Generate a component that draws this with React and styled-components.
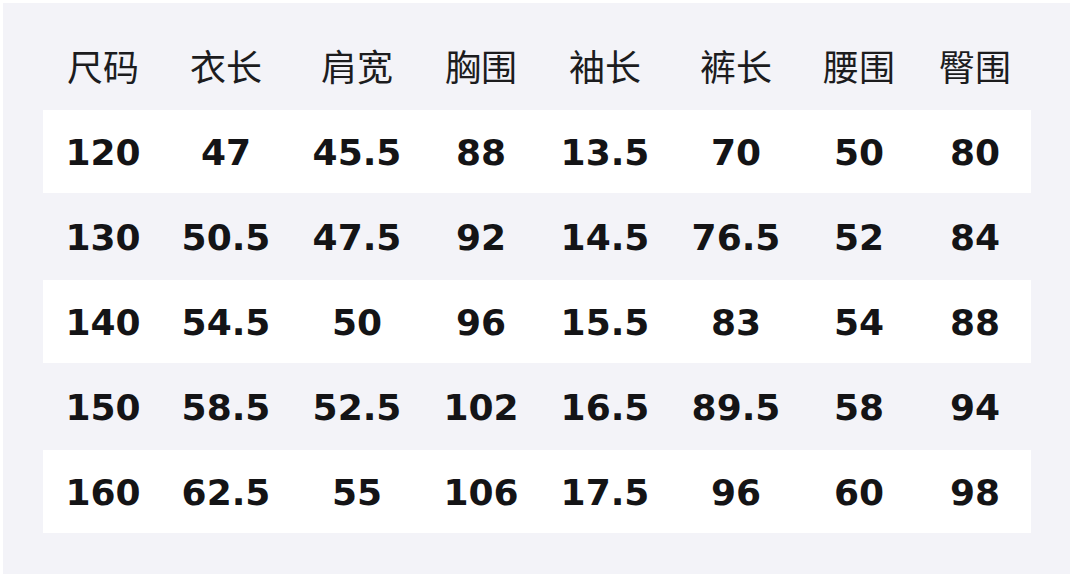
import React from 'react';
import styled, { createGlobalStyle } from 'styled-components';

const GlobalStyle = createGlobalStyle`
    html, body {
        margin: 0;
        padding: 0;
        background: #ffffff;
    }
`;

const headers = ['尺码', '衣长', '肩宽', '胸围', '袖长', '裤长', '腰围', '臀围'];

const rows = [
    ['120', '47', '45.5', '88', '13.5', '70', '50', '80'],
    ['130', '50.5', '47.5', '92', '14.5', '76.5', '52', '84'],
    ['140', '54.5', '50', '96', '15.5', '83', '54', '88'],
    ['150', '58.5', '52.5', '102', '16.5', '89.5', '58', '94'],
    ['160', '62.5', '55', '106', '17.5', '96', '60', '98'],
];

const SizeChart = () => {
    return (
        <Page>
            <Panel>
                <HeaderRow>
                    {headers.map((h) => (
                        <HeadCell key={h}>{h}</HeadCell>
                    ))}
                </HeaderRow>
                {rows.map((row, rowIndex) => (
                    <Row key={row[0]} $striped={rowIndex % 2 === 0}>
                        {row.map((value, i) => (
                            <Cell key={i}>{value}</Cell>
                        ))}
                    </Row>
                ))}
            </Panel>
        </Page>
    );
};

const columns = '120px 126px 136px 112px 136px 126px 120px 112px';

const Page = styled.div`
    width: 1074px;
    height: 578px;
    padding: 3px 4px 4px 3px;
    box-sizing: border-box;
    background: #ffffff;
`;

const Panel = styled.div`
    height: 100%;
    box-sizing: border-box;
    background: #f3f3f8;
    padding: 30px 39px 0 40px;
`;

const HeaderRow = styled.div`
    display: grid;
    grid-template-columns: ${columns};
    height: 77px;
    align-items: center;
`;

const HeadCell = styled.div`
    text-align: center;
    font-family: "Noto Sans CJK SC", "Noto Sans", sans-serif;
    font-size: 36px;
    font-weight: 400;
    color: #1c1c1e;
    line-height: 1;
    padding-bottom: 14px;
`;

const Row = styled.div`
    display: grid;
    grid-template-columns: ${columns};
    align-items: center;
    height: 85px;
    box-sizing: border-box;
    background: ${(p) => (p.$striped ? '#ffffff' : 'transparent')};
    border-bottom: 2px solid #f3f3f8;
`;

const Cell = styled.div`
    text-align: center;
    font-family: "DejaVu Sans", "Liberation Sans", sans-serif;
    font-weight: 700;
    font-size: 36px;
    color: #141416;
    line-height: 1;
    padding-top: 2px;
`;

export default function App() {
    return (
        <>
            <GlobalStyle />
            <SizeChart />
        </>
    );
}
